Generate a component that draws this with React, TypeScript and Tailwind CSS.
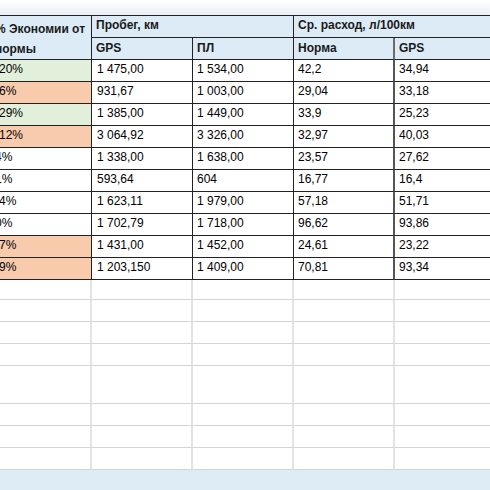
import React from "react";

type Row = { pct: string; tone: "g" | "o" | "w"; gps: string; pl: string; norm: string; gps2: string };

const rows: Row[] = [
  { pct: "-20%", tone: "g", gps: "1 475,00", pl: "1 534,00", norm: "42,2", gps2: "34,94" },
  { pct: "-6%", tone: "o", gps: "931,67", pl: "1 003,00", norm: "29,04", gps2: "33,18" },
  { pct: "-29%", tone: "g", gps: "1 385,00", pl: "1 449,00", norm: "33,9", gps2: "25,23" },
  { pct: "-12%", tone: "o", gps: "3 064,92", pl: "3 326,00", norm: "32,97", gps2: "40,03" },
  { pct: "4%", tone: "w", gps: "1 338,00", pl: "1 638,00", norm: "23,57", gps2: "27,62" },
  { pct: "1%", tone: "w", gps: "593,64", pl: "604", norm: "16,77", gps2: "16,4" },
  { pct: "-4%", tone: "w", gps: "1 623,11", pl: "1 979,00", norm: "57,18", gps2: "51,71" },
  { pct: "0%", tone: "w", gps: "1 702,79", pl: "1 718,00", norm: "96,62", gps2: "93,86" },
  { pct: "-7%", tone: "o", gps: "1 431,00", pl: "1 452,00", norm: "24,61", gps2: "23,22" },
  { pct: "-9%", tone: "o", gps: "1 203,150", pl: "1 409,00", norm: "70,81", gps2: "93,34" },
];

const emptyHeights = [20, 22, 22, 22, 38, 22, 22, 22];

const font = { fontFamily: '"Liberation Sans", Arial, sans-serif' };

export default function App() {
  return (
    <div className="w-[490px] h-[490px] overflow-hidden bg-white flex flex-col text-black" style={font}>
      <div className="h-[15px] shrink-0 bg-gradient-to-b from-white to-[#e9f0f7]" />
      <div className="ml-[-9px] w-[505px] shrink-0">
        {/* header */}
        <div className="grid grid-cols-[101px_101px_101px_101px_101px] grid-rows-[22px_22px] border-t border-[#222] bg-[#ddebf7] text-[12px] font-bold text-[#1a1a1a]">
          <div className="row-span-2 border-r border-b border-[#222] pl-[4px] pt-[3px] leading-[20px] overflow-hidden">
            <div>% Экономии от</div>
            <div>нормы</div>
          </div>
          <div className="col-span-2 border-r border-b border-[#222] pl-[4px] flex items-end pb-[3px]">Пробег, км</div>
          <div className="col-span-2 border-b border-[#222] pl-[4px] flex items-end pb-[3px]">Ср. расход, л/100км</div>
          <div className="border-r border-b border-[#222] pl-[4px] flex items-end pb-[2px]">GPS</div>
          <div className="border-r border-b border-[#222] pl-[4px] flex items-end pb-[2px]">ПЛ</div>
          <div className="border-r-2 border-b border-r-[#6b6b6b] border-b-[#222] pl-[4px] flex items-end pb-[2px]">Норма</div>
          <div className="border-r border-b border-[#222] pl-[4px] flex items-end pb-[2px]">GPS</div>
        </div>
        {/* data */}
        {rows.map((r, i) => (
          <div key={i} className="grid grid-cols-[101px_101px_101px_101px_101px] text-[12px]">
            <div
              className={
                "h-[22px] border-r border-b border-[#222] pl-[4px] flex items-end pb-[3px] " +
                (r.tone === "g" ? "bg-[#e2efda]" : r.tone === "o" ? "bg-[#f8cbad]" : "bg-white")
              }
            >
              {r.pct}
            </div>
            <div className="h-[22px] border-r border-b border-[#222] pl-[5px] flex items-end pb-[3px]">{r.gps}</div>
            <div className="h-[22px] border-r border-b border-[#222] pl-[4px] flex items-end pb-[3px]">{r.pl}</div>
            <div className="h-[22px] border-r-2 border-b border-r-[#555] border-b-[#222] pl-[4px] flex items-end pb-[3px]">{r.norm}</div>
            <div className="h-[22px] border-r border-b border-[#222] pl-[4px] flex items-end pb-[3px]">{r.gps2}</div>
          </div>
        ))}
        {/* empty grid */}
        {emptyHeights.map((h, i) => (
          <div
            key={"e" + i}
            className="grid grid-cols-[101px_101px_101px_101px_101px]"
            style={{ height: h }}
          >
            <div className="border-r-2 border-b border-r-[#e3e3e3] border-b-[#d4d4d4]" />
            <div className="border-r-2 border-b border-r-[#e3e3e3] border-b-[#d4d4d4]" />
            <div className="border-r-2 border-b border-r-[#e3e3e3] border-b-[#d4d4d4]" />
            <div className="border-r-2 border-b border-r-[#e3e3e3] border-b-[#d4d4d4]" />
            <div className="border-r-2 border-b border-r-[#e3e3e3] border-b-[#d4d4d4]" />
          </div>
        ))}
      </div>
      <div className="flex-1 bg-[#deecf6]" />
    </div>
  );
}
